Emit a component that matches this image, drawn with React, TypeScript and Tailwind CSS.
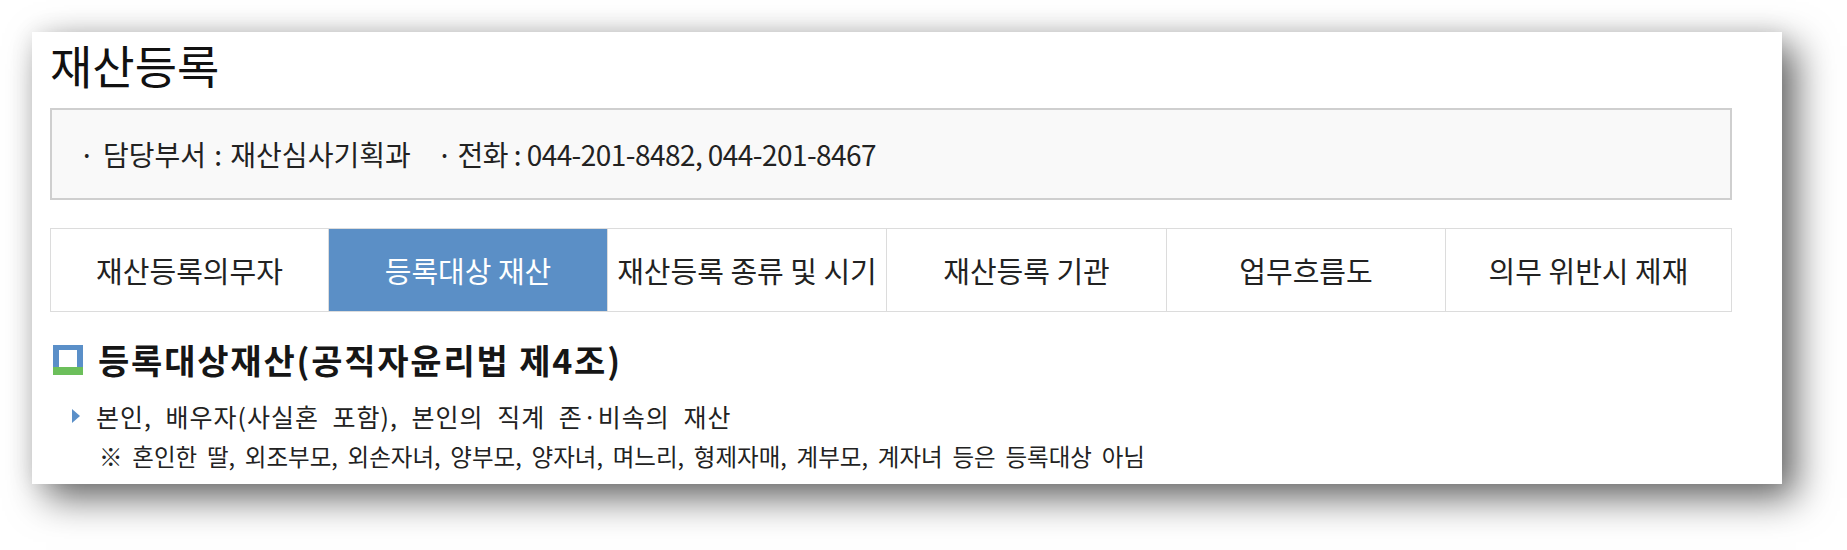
import clsx from "clsx";

const tabs = [
  "재산등록의무자",
  "등록대상 재산",
  "재산등록 종류 및 시기",
  "재산등록 기관",
  "업무흐름도",
  "의무 위반시 제재",
];

function SquareIcon() {
  return (
    <svg width="30" height="30" viewBox="0 0 30 30" className="shrink-0">
      <rect x="0" y="0" width="30" height="22" fill="#5a8fc8" />
      <rect x="0" y="22" width="30" height="8" fill="#6cbf5b" />
      <rect x="6" y="5" width="18" height="17" fill="#ffffff" />
    </svg>
  );
}

function Arrow() {
  return (
    <svg width="8" height="14" viewBox="0 0 8 14" className="shrink-0">
      <polygon points="0,0 8,7 0,14" fill="#5a8fc8" />
    </svg>
  );
}

export default function App() {
  return (
    <div className="min-h-[550px] w-full bg-white pl-8 pt-8 font-['Noto_Sans_CJK_KR','Noto_Sans',sans-serif] text-[#222]">
      <div className="h-[452px] w-[1750px] bg-white pl-[18px] pt-[9px] shadow-[14px_14px_36px_rgba(0,0,0,0.6),0_0_22px_rgba(0,0,0,0.08)]">
        {/* 제목 */}
        <h1 className="text-[46px] leading-none text-[#111]">재산등록</h1>

        {/* 담당부서 안내 */}
        <div className="mt-[21px] flex h-[92px] w-[1682px] items-center border-2 border-[#cfcfcf] bg-[#f9f9f9] pl-[27px] text-[28px] leading-none">
          <span className="[word-spacing:2px]">· 담당부서 : 재산심사기획과</span>
          <span className="ml-[26px] tracking-[-0.55px]">· 전화 : 044-201-8482, 044-201-8467</span>
        </div>

        {/* 탭 */}
        <div className="mt-7 grid h-[84px] w-[1682px] grid-cols-[277px_279px_279px_280px_279px_1fr] border border-[#dcdcdc]">
          {tabs.map((t, i) => (
            <div
              key={t}
              className={clsx(
                "flex items-center justify-center text-[29px] leading-none",
                i > 0 && "border-l border-[#dcdcdc]",
                i === 1 ? "bg-[#5b8fc6] text-white" : "text-[#222]"
              )}
            >
              {t}
            </div>
          ))}
        </div>

        {/* 소제목 */}
        <div className="mt-[33px] flex h-[30px] items-center pl-[3px]">
          <SquareIcon />
          <h2 className="ml-[15px] text-[34px] font-bold leading-none tracking-[1.8px] text-[#161616]">
            등록대상재산(공직자윤리법 제4조)
          </h2>
        </div>

        {/* 내용 */}
        <div className="mt-[26px] flex h-[30px] items-center pl-[22px]">
          <Arrow />
          <p className="ml-4 text-[25px] leading-none tracking-[1px] [word-spacing:7px]">
            본인, 배우자(사실혼 포함), 본인의 직계 존·비속의 재산
          </p>
        </div>
        <div className="mt-[11px] flex h-[30px] items-center pl-[49px]">
          <p className="text-[23.5px] leading-none [word-spacing:4.5px]">
            ※ 혼인한 딸, 외조부모, 외손자녀, 양부모, 양자녀, 며느리, 형제자매, 계부모, 계자녀 등은 등록대상 아님
          </p>
        </div>
      </div>
    </div>
  );
}
